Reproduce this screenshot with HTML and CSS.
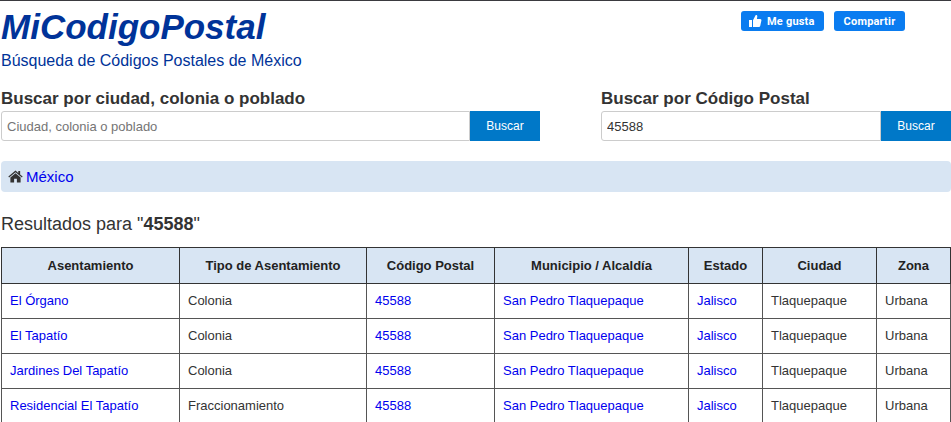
FILE: index.html
```html
<!DOCTYPE html>
<html lang="es">
<head>
<meta charset="utf-8">
<title>MiCodigoPostal</title>
<link rel="stylesheet" href="styles.css">
</head>
<body>
<header class="top">
  <div class="brand">
    <h1 class="title">MiCodigoPostal</h1>
    <p class="subtitle">Búsqueda de Códigos Postales de México</p>
  </div>
  <div class="social">
    <span class="sbtn like"><svg class="thumb" viewBox="0 0 14 14" width="14" height="14"><path fill="#fff" d="M1 6h3v7H1zM5 6.2 7.6 1.2c.9-.4 1.8.2 1.7 1.3L8.9 5H12.2c.9 0 1.4.8 1.2 1.6l-1.2 5.4c-.2.6-.6 1-1.2 1H5z"/></svg>Me gusta</span>
    <span class="sbtn share">Compartir</span>
  </div>
</header>
<section class="search">
  <form class="sform">
    <label class="slabel" for="q">Buscar por ciudad, colonia o poblado</label>
    <div class="group">
      <input class="sinput" id="q" type="text" placeholder="Ciudad, colonia o poblado">
      <button class="sbutton" type="button">Buscar</button>
    </div>
  </form>
  <form class="sform">
    <label class="slabel" for="cp">Buscar por Código Postal</label>
    <div class="group">
      <input class="sinput" id="cp" type="text" value="45588">
      <button class="sbutton" type="button">Buscar</button>
    </div>
  </form>
</section>
<nav class="crumb">
  <svg class="home" viewBox="0 0 16 14" width="15" height="13"><path fill="#333" d="M8 0.6 0.3 7l.8 1L8 2.4 14.9 8l.8-1L13 4.8V1.2h-2v1.9zM8 3.6 2.5 8.1V13.4H6.5V9.5h3v3.9h4V8.1z"/></svg>
  <a href="#">México</a>
</nav>
<h2 class="results">Resultados para "<strong>45588</strong>"</h2>
<table class="tbl">
  <colgroup>
    <col class="c1"><col class="c2"><col class="c3"><col class="c4"><col class="c5"><col class="c6"><col class="c7">
  </colgroup>
  <thead>
    <tr><th>Asentamiento</th><th>Tipo de Asentamiento</th><th>Código Postal</th><th>Municipio / Alcaldía</th><th>Estado</th><th>Ciudad</th><th>Zona</th></tr>
  </thead>
  <tbody>
    <tr><td><a href="#">El Órgano</a></td><td>Colonia</td><td><a href="#">45588</a></td><td><a href="#">San Pedro Tlaquepaque</a></td><td><a href="#">Jalisco</a></td><td>Tlaquepaque</td><td>Urbana</td></tr>
    <tr><td><a href="#">El Tapatío</a></td><td>Colonia</td><td><a href="#">45588</a></td><td><a href="#">San Pedro Tlaquepaque</a></td><td><a href="#">Jalisco</a></td><td>Tlaquepaque</td><td>Urbana</td></tr>
    <tr><td><a href="#">Jardines Del Tapatío</a></td><td>Colonia</td><td><a href="#">45588</a></td><td><a href="#">San Pedro Tlaquepaque</a></td><td><a href="#">Jalisco</a></td><td>Tlaquepaque</td><td>Urbana</td></tr>
    <tr><td><a href="#">Residencial El Tapatío</a></td><td>Fraccionamiento</td><td><a href="#">45588</a></td><td><a href="#">San Pedro Tlaquepaque</a></td><td><a href="#">Jalisco</a></td><td>Tlaquepaque</td><td>Urbana</td></tr>
  </tbody>
</table>
</body>
</html>
```
FILE: styles.css
```css
* { box-sizing: border-box; }
html, body { height: 422px; overflow: hidden; }
body {
  margin: 0;
  padding: 0 0 0 1px;
  border-top: 1px solid #3a3a3f;
  font-family: "Liberation Sans", Arial, sans-serif;
  font-size: 14px;
  color: #333;
  background: #fff;
}
a { color: #0000ee; text-decoration: none; }
.top { display: flex; justify-content: space-between; height: 88px; }
.title {
  margin: 0;
  padding-top: 5px;
  font-size: 35px;
  line-height: 41px;
  font-style: italic;
  font-weight: bold;
  color: #003399;
}
.subtitle { margin: 5px 0 0; font-size: 16px; line-height: 18px; color: #003399; }
.social { display: flex; gap: 10px; padding: 10px 46px 0 0; align-items: flex-start; }
.sbtn {
  display: flex;
  align-items: center;
  height: 20px;
  border-radius: 3px;
  background: #0a7cf0;
  color: #fff;
  font-family: Roboto, "Liberation Sans", sans-serif;
  font-size: 11px;
  font-weight: bold;
  letter-spacing: 0.2px;
}
.like { width: 83px; padding-left: 7px; gap: 5px; }
.share { width: 71px; justify-content: center; }
.search { display: grid; grid-template-columns: 539px 350px; column-gap: 61px; }
.sform { display: block; }
.slabel { display: block; font-size: 17px; font-weight: bold; line-height: 20px; color: #333; margin-bottom: 2px; }
.group { display: flex; height: 30px; }
.sinput {
  flex: 1;
  min-width: 0;
  height: 30px;
  padding: 0 5px;
  border: 1px solid #ccc;
  border-radius: 3px 0 0 3px;
  font-family: "Liberation Sans", Arial, sans-serif;
  font-size: 13px;
  color: #333;
  outline: none;
}
.sinput::placeholder { color: #757575; opacity: 1; }
.sbutton {
  width: 70px;
  height: 30px;
  border: 0;
  padding: 0;
  background: #0078c8;
  color: #fff;
  font-family: "Liberation Sans", Arial, sans-serif;
  font-size: 12px;
}
.crumb {
  display: flex;
  align-items: center;
  gap: 3px;
  height: 31px;
  margin-top: 20px;
  padding-left: 7px;
  border-radius: 4px;
  background: #d8e5f3;
  font-size: 15px;
}
.results { margin: 22px 0 0; font-size: 18px; line-height: 21px; font-weight: normal; color: #333; }
.results strong { font-weight: bold; }
.tbl {
  margin-top: 12px;
  width: 949px;
  table-layout: fixed;
  border-collapse: collapse;
  font-size: 13px;
}
.c1 { width: 178px; } .c2 { width: 187px; } .c3 { width: 128px; } .c4 { width: 194px; }
.c5 { width: 74px; } .c6 { width: 114px; } .c7 { width: 74px; }
.tbl th, .tbl td { border: 1px solid #555; padding: 0 8px 2px; height: 35px; }
.tbl th { height: 36px; text-align: center; background: #d8e5f3; color: #222; font-weight: bold; border-color: #333; padding-bottom: 0; }
.tbl td { color: #333; }
```
